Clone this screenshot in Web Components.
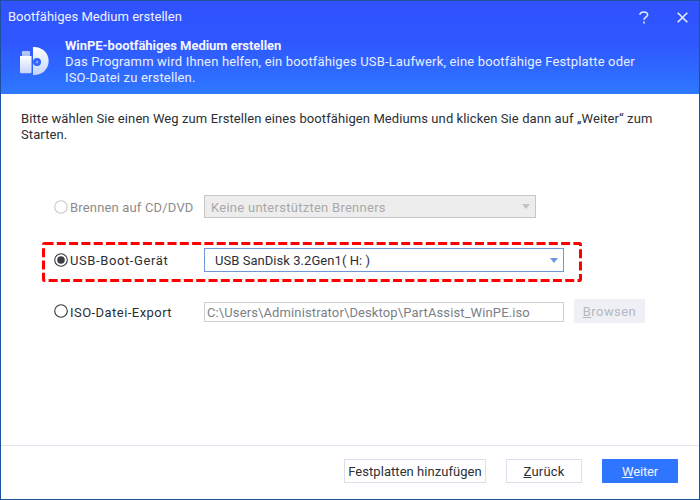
<!DOCTYPE html>
<html lang="de">
<head>
<meta charset="utf-8">
<title>Bootfähiges Medium erstellen</title>
<style>
    html, body { margin: 0; padding: 0; background: #fff; }
    body { font: 13px/16px Roboto, "Liberation Sans", sans-serif; letter-spacing: .15px; color: #2b2f36; }
</style>
</head>
<body>
<app-dialog>
    <dialog-header slot="header"></dialog-header>
    <p slot="intro">Bitte wählen Sie einen Weg zum Erstellen eines bootfähigen Mediums und klicken Sie dann auf „Weiter“ zum Starten.</p>
    <option-row slot="options" label="Brennen auf CD/DVD" disabled spacing=".17" after="24" height="23" drop="2">
        <select-box value="Keine unterstützten Brenners" disabled width="332"></select-box>
    </option-row>
    <option-row slot="options" label="USB-Boot-Gerät" checked highlight spacing=".6" after="18" height="39" drop="2">
        <select-box value="USB SanDisk 3.2Gen1( H: )" width="360"></select-box>
    </option-row>
    <option-row slot="options" label="ISO-Datei-Export" spacing=".45" after="0" height="24" drop="4">
        <path-input value="C:\Users\Administrator\Desktop\PartAssist_WinPE.iso"></path-input>
        <action-button kind="muted" mnemonic="B" rest="rowsen" width="71"></action-button>
    </option-row>
    <action-button slot="footer" text="Festplatten hinzufügen" width="142" spacing=".05"></action-button>
    <action-button slot="footer" mnemonic="Z" rest="urück" width="76"></action-button>
    <action-button slot="footer" kind="primary" mnemonic="W" rest="eiter" width="76" spacing="-.15"></action-button>
</app-dialog>

<script>
class AppDialog extends HTMLElement {
    constructor() {
        super();
        this.attachShadow({ mode: 'open' });
    }

    connectedCallback() {
        this.shadowRoot.innerHTML = `
        <style>
            :host {
                display: flex;
                flex-direction: column;
                box-sizing: border-box;
                width: 700px;
                height: 500px;
                border: 1px solid #1d4f9e;
                background: #fff;
            }
            .intro { padding: 17px 20px 0; height: 101px; box-sizing: border-box; letter-spacing: .09px; }
            ::slotted(p) { margin: 0; }
            .options { flex: 1; display: flex; flex-direction: column; }
            .footer {
                height: 54px;
                box-sizing: border-box;
                border-top: 1px solid #dfe4ee;
                padding: 13px 21px 0 0;
                display: flex;
                justify-content: flex-end;
                gap: 20px;
            }
        </style>
        <slot name="header"></slot>
        <div class="intro"><slot name="intro"></slot></div>
        <div class="options"><slot name="options"></slot></div>
        <div class="footer"><slot name="footer"></slot></div>
        `;
    }
}

class DialogHeader extends HTMLElement {
    constructor() {
        super();
        this.attachShadow({ mode: 'open' });
    }

    connectedCallback() {
        this.shadowRoot.innerHTML = `
        <style>
            :host {
                display: block;
                height: 93px;
                color: #fff;
                background: linear-gradient(180deg, #2f53ff 0%, #2f57ff 45%, #2e78ff 100%);
            }
            .bar {
                height: 32px;
                padding: 0 11px 0 7px;
                display: flex;
                align-items: center;
                font-size: 13px;
                letter-spacing: .02px;
                color: #eef1ff;
            }
            .title { flex: 1; }
            .bar svg { display: block; }
            .bar .help { margin-right: 28px; }
            .main { display: flex; padding: 1px 0 0 18px; }
            .logo { flex: none; width: 33px; height: 36px; margin: 12px 13px 0 0; }
            .text { line-height: 16px; color: #e9eeff; padding-top: 4px; letter-spacing: .165px; }
            b { display: block; font-weight: 700; color: #f2f4ff; letter-spacing: -.05px; }
        </style>
        <div class="bar">
            <span class="title">Bootfähiges Medium erstellen</span>
            <svg class="help" width="10" height="13" viewBox="0 0 10 13" fill="none" stroke="#e6eaff" stroke-width="1.6">
                <path d="M1 3.800C1 2 2.800 1 4.800 1S8.600 2 8.600 3.700c0 2.400-3.600 2.400-3.600 5"/>
                <path d="M5 10.500v2"/>
            </svg>
            <svg width="11" height="11" viewBox="0 0 11 11" stroke="#e6eaff" stroke-width="1.6">
                <path d="M.7 .7l9.600 9.600M10.300 .7L.7 10.300"/>
            </svg>
        </div>
        <div class="main">
            <svg class="logo" viewBox="0 0 33 36">
                <defs>
                    <linearGradient id="disc" x1="0" y1="0" x2="0" y2="1">
                        <stop offset="0" stop-color="#fff"/><stop offset="1" stop-color="#c5d4fb"/>
                    </linearGradient>
                </defs>
                <path fill="url(#disc)" fill-rule="evenodd" d="M14 1.100a14 14 0 1 1 0 27.800zM18 12a4 4 0 1 0 0 8a4 4 0 0 0 0-8z"/>
                <circle cx="18" cy="16" r="1.500" fill="#7f9ffb"/>
                <rect x="3" y="5" width="8" height="5" rx=".8" fill="#b4c3f5"/>
                <path fill="url(#disc)" d="M1 10h11.500v16a1.200 1.200 0 0 1-1.200 1.200H2.200A1.200 1.200 0 0 1 1 26z"/>
            </svg>
            <div class="text">
                <b>WinPE-bootfähiges Medium erstellen</b>
                Das Programm wird Ihnen helfen, ein bootfähiges USB-Laufwerk, eine bootfähige Festplatte oder<br>ISO-Datei zu erstellen.
            </div>
        </div>
        `;
    }
}

class OptionRow extends HTMLElement {
    constructor() {
        super();
        this.attachShadow({ mode: 'open' });
    }

    connectedCallback() {
        const disabled = this.hasAttribute('disabled');
        const checked = this.hasAttribute('checked');
        const highlight = this.hasAttribute('highlight');
        const ring = disabled ? '#c9c9c9' : '#33363c';
        const height = this.getAttribute('height');
        this.shadowRoot.innerHTML = `
        <style>
            :host {
                display: block;
                position: relative;
                box-sizing: border-box;
                margin: 0 0 ${this.getAttribute('after')}px 41px;
                width: 604px;
                color: ${disabled ? '#8c8c8c' : '#2b2f36'};
            }
            .row {
                display: flex;
                align-items: center;
                box-sizing: border-box;
                height: ${height}px;
                padding: 0 0 ${highlight ? 3 : 0}px 12px;
            }
            .radio { flex: none; width: 14px; height: 14px; margin-right: 2px; display: block; }
            .label {
                width: 134px;
                flex: none;
                padding-top: ${this.getAttribute('drop')}px;
                white-space: nowrap;
                letter-spacing: ${this.getAttribute('spacing')}px;
            }
            .fields { display: flex; gap: 10px; align-items: center; }
            .dash { position: absolute; left: 0; top: 0; pointer-events: none; }
        </style>
        <div class="row">
            <svg class="radio" viewBox="0 0 14 14">
                <circle cx="7" cy="7" r="6.300" fill="#fff" stroke="${ring}" stroke-width="1.100"/>
                ${checked ? '<circle cx="7" cy="7" r="3.800" fill="#3a3d44"/>' : ''}
            </svg>
            <span class="label">${this.getAttribute('label')}</span>
            <div class="fields"><slot></slot></div>
        </div>
        ${highlight ? `<svg class="dash" width="540" height="40"><rect x="1.500" y="1.500" width="537" height="37" rx="1" fill="none" stroke="#f00" stroke-width="3" stroke-dasharray="9 3.300"/></svg>` : ''}
        `;
    }
}

class SelectBox extends HTMLElement {
    constructor() {
        super();
        this.attachShadow({ mode: 'open' });
    }

    connectedCallback() {
        const disabled = this.hasAttribute('disabled');
        this.shadowRoot.innerHTML = `
        <style>
            :host {
                display: flex;
                align-items: center;
                box-sizing: border-box;
                width: ${this.getAttribute('width')}px;
                height: ${disabled ? 23 : 24}px;
                padding: 0 5px 0 ${disabled ? 6 : 10}px;
                border: 1px solid ${disabled ? '#c6c6c6' : '#6d97d9'};
                background: ${disabled ? '#ededed' : '#fff'};
                color: ${disabled ? '#a9a9a9' : '#2b2f36'};
                letter-spacing: ${disabled ? .27 : .05}px;
            }
            span { flex: 1; white-space: nowrap; padding-top: 2px; }
            i {
                width: 0;
                height: 0;
                border: 4.500px solid transparent;
                border-bottom: 0;
                border-top: 5px solid ${disabled ? '#c2c2c2' : '#6d97d9'};
            }
        </style>
        <span>${this.getAttribute('value')}</span><i></i>
        `;
    }
}

class PathInput extends HTMLElement {
    constructor() {
        super();
        this.attachShadow({ mode: 'open' });
    }

    connectedCallback() {
        this.shadowRoot.innerHTML = `
        <style>
            :host {
                display: flex;
                align-items: center;
                box-sizing: border-box;
                width: 360px;
                height: 20px;
                margin-top: 2px;
                padding: 1px 2px 0;
                border: 1px solid #cfcfcf;
                color: #7c8087;
                white-space: nowrap;
                overflow: hidden;
                letter-spacing: .12px;
            }
        </style>
        ${this.getAttribute('value')}
        `;
    }
}

class ActionButton extends HTMLElement {
    constructor() {
        super();
        this.attachShadow({ mode: 'open' });
    }

    connectedCallback() {
        const kind = this.getAttribute('kind');
        const colors = {
            primary: 'background:#2e76ff;color:#eef3ff;border-color:#2e76ff;',
            muted: 'background:#eef0f5;color:#b4b8c2;border-color:#eef0f5;letter-spacing:.45px;'
        };
        const mnemonic = this.getAttribute('mnemonic');
        const text = mnemonic ? `<u>${mnemonic}</u>${this.getAttribute('rest')}` : this.getAttribute('text');
        const spacing = this.getAttribute('spacing');
        this.shadowRoot.innerHTML = `
        <style>
            :host {
                display: flex;
                align-items: center;
                justify-content: center;
                box-sizing: border-box;
                width: ${this.getAttribute('width')}px;
                height: 24px;
                padding-top: 1px;
                border: 1px solid #dbe1ec;
                background: #fff;
                white-space: nowrap;
                ${spacing ? `letter-spacing:${spacing}px;` : ''}
                ${colors[kind] || ''}
            }
        </style>
        ${text}
        `;
    }
}

customElements.define('app-dialog', AppDialog);
customElements.define('dialog-header', DialogHeader);
customElements.define('option-row', OptionRow);
customElements.define('select-box', SelectBox);
customElements.define('path-input', PathInput);
customElements.define('action-button', ActionButton);
</script>
</body>
</html>
